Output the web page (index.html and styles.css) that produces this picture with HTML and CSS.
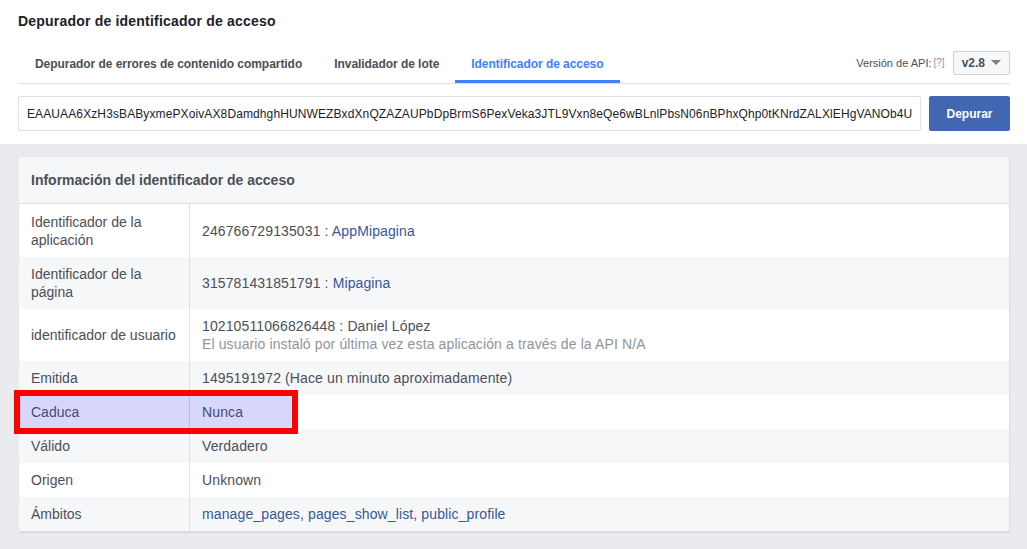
FILE: index.html
```html
<!DOCTYPE html>
<html>
<head>
  <meta charset="UTF-8">
  <title>Depurador de identificador de acceso</title>
  <link rel="stylesheet" href="styles.css">
</head>
<body>
  <div class="top">
    <h1 class="title">Depurador de identificador de acceso</h1>
    <div class="tabs">
      <a href="#" class="tab">Depurador de errores de contenido compartido</a>
      <a href="#" class="tab">Invalidador de lote</a>
      <a href="#" class="tab active">Identificador de acceso</a>
      <div class="version">
        <span class="version-label">Versión de API:</span>
        <span class="help">[?]</span>
        <button class="select">v2.8 <span class="caret"></span></button>
      </div>
    </div>
    <div class="token-row">
      <input type="text" class="token" value="EAAUAA6XzH3sBAByxmePXoivAX8DamdhghHUNWEZBxdXnQZAZAUPbDpBrmS6PexVeka3JTL9Vxn8eQe6wBLnlPbsN06nBPhxQhp0tKNrdZALXlEHgVANOb4UZBkWmZCpa">
      <button class="btn">Depurar</button>
    </div>
  </div>

  <div class="content">
    <div class="card">
      <div class="card-head">Información del identificador de acceso</div>
      <div class="row first">
        <div class="label">Identificador de la aplicación</div>
        <div class="value"><span>246766729135031 : <a href="#">AppMipagina</a></span></div>
      </div>
      <div class="row alt">
        <div class="label">Identificador de la página</div>
        <div class="value"><span>315781431851791 : <a href="#">Mipagina</a></span></div>
      </div>
      <div class="row">
        <div class="label">identificador de usuario</div>
        <div class="value">
          <div>
            10210511066826448 : Daniel López
            <div class="note">El usuario instaló por última vez esta aplicación a través de la API N/A</div>
          </div>
        </div>
      </div>
      <div class="row alt">
        <div class="label">Emitida</div>
        <div class="value"><span>1495191972 (Hace un minuto aproximadamente)</span></div>
      </div>
      <div class="row marked">
        <div class="label">Caduca</div>
        <div class="value"><span>Nunca</span></div>
        <div class="mark"></div>
      </div>
      <div class="row alt">
        <div class="label">Válido</div>
        <div class="value"><span>Verdadero</span></div>
      </div>
      <div class="row">
        <div class="label">Origen</div>
        <div class="value"><span>Unknown</span></div>
      </div>
      <div class="row alt">
        <div class="label">Ámbitos</div>
        <div class="value"><span><a href="#">manage_pages</a>, <a href="#">pages_show_list</a>, <a href="#">public_profile</a></span></div>
      </div>
    </div>
  </div>
</body>
</html>
```

FILE: styles.css
```css
* {
  margin: 0;
  padding: 0;
  box-sizing: border-box;
}

body {
  font-family: "Liberation Sans", Arial, sans-serif;
  color: #4b4f56;
  background-color: white;
}

a {
  color: #365899;
  text-decoration: none;
}

.top {
  padding: 12px 17px 13px 18px;
}

.title {
  font-size: 14px;
  line-height: 18px;
  font-weight: bold;
  color: #1d2129;
  letter-spacing: 0.2px;
}

.tabs {
  display: flex;
  align-items: center;
  height: 40px;
  margin-top: 14px;
  border-bottom: 1px solid #dddfe2;
}

.tab {
  display: flex;
  align-items: center;
  height: 39px;
  padding: 3px 16px 0 17px;
  font-size: 12px;
  font-weight: bold;
  letter-spacing: -0.05px;
  color: #4b4f56;
  border-bottom: 3px solid transparent;
}

.tab + .tab {
  padding-left: 16px;
}

.tab.active {
  color: #4080ff;
  border-bottom-color: #4080ff;
}

.version {
  margin-left: auto;
  display: flex;
  align-items: center;
  padding-bottom: 2px;
}

.version-label {
  font-size: 11px;
  color: #4b4f56;
}

.help {
  font-size: 10px;
  color: #90949c;
  margin-left: 2px;
  margin-right: 8px;
}

.select {
  display: flex;
  align-items: center;
  height: 24px;
  padding: 0 8px;
  font-family: "Liberation Sans", Arial, sans-serif;
  font-size: 12px;
  font-weight: bold;
  color: #4b4f56;
  background-color: #f6f7f9;
  border: 1px solid #ced0d4;
  border-radius: 2px;
}

.caret {
  display: inline-block;
  margin-left: 6px;
  border-left: 5px solid transparent;
  border-right: 5px solid transparent;
  border-top: 5px solid #7f7f7f;
}

.token-row {
  display: flex;
  gap: 8px;
  margin-top: 12px;
}

.token {
  flex: 1;
  min-width: 0;
  height: 35px;
  padding: 0 8px;
  font-family: "Liberation Sans", Arial, sans-serif;
  font-size: 12px;
  letter-spacing: 0.11px;
  color: #1d2129;
  border: 1px solid #dddfe2;
  border-radius: 2px;
  outline: none;
}

.btn {
  width: 81px;
  height: 35px;
  font-family: "Liberation Sans", Arial, sans-serif;
  font-size: 12px;
  font-weight: bold;
  color: white;
  background-color: #4267b2;
  border: 1px solid #4267b2;
  border-radius: 2px;
}

.content {
  background-color: #e9ebee;
  padding: 13px 17px 17px 19px;
}

.card {
  background-color: white;
  border-right: 1px solid #dddfe2;
  border-bottom: 1px solid #dddfe2;
  box-shadow: 0 1px 1px rgba(0, 0, 0, 0.08);
}

.card-head {
  height: 47px;
  padding: 0 12px;
  display: flex;
  align-items: center;
  font-size: 14px;
  font-weight: bold;
  background-color: #f6f7f9;
  border-bottom: 1px solid #dddfe2;
}

.row {
  display: flex;
  font-size: 14px;
  line-height: 18px;
}

.row.alt {
  background-color: #f6f7f9;
}

.row.first {
  min-height: 53px;
}

.label {
  width: 171px;
  flex-shrink: 0;
  padding: 8px 12px;
  border-right: 1px solid #dddfe2;
  display: flex;
  align-items: center;
}

.value {
  flex: 1;
  padding: 8px 12px;
  display: flex;
  align-items: center;
  letter-spacing: 0.12px;
}

.note {
  color: #90949c;
}

.marked {
  position: relative;
}

.mark {
  position: absolute;
  left: -5px;
  top: -5px;
  width: 284px;
  height: 44px;
  border: 6px solid #ff0000;
  background-clip: padding-box;
  background-color: rgba(55, 55, 235, 0.2);
  pointer-events: none;
}
```
